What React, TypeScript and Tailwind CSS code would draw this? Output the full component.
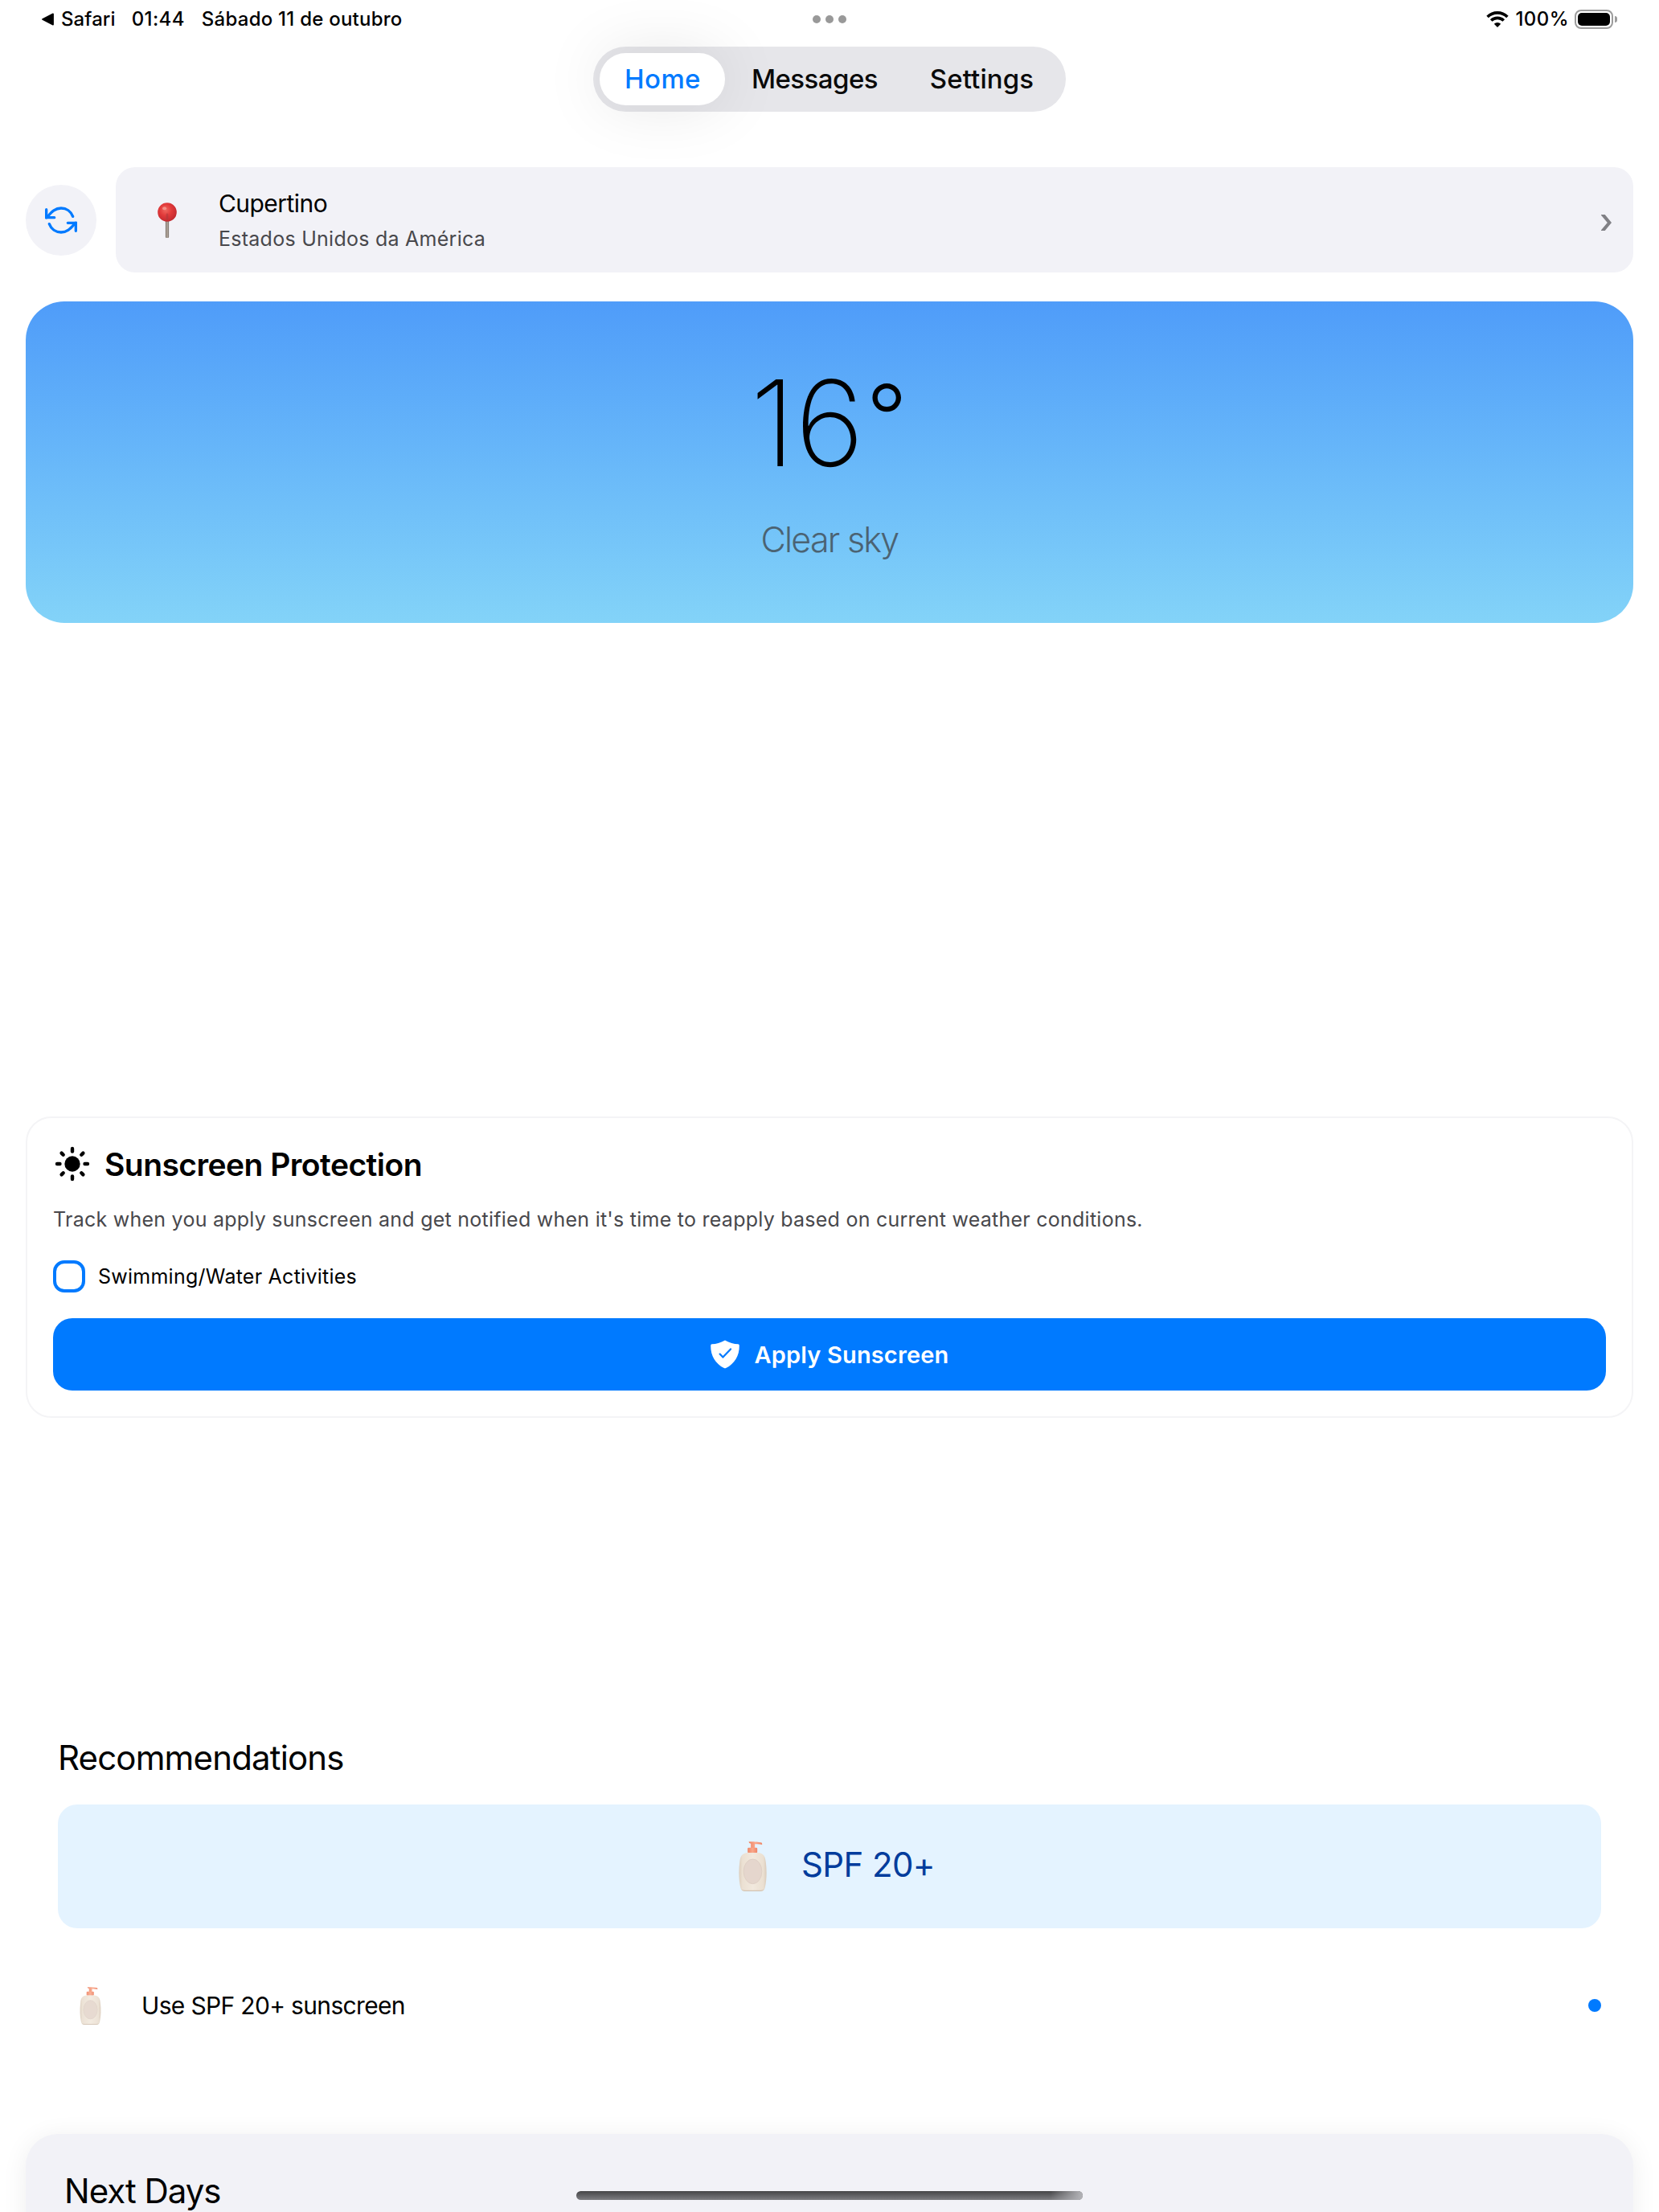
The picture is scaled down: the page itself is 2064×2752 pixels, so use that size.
function WifiIcon() {
  return (
    <svg width="28" height="20" viewBox="0 0 28 20" fill="none" stroke="#000" strokeWidth="3.6">
      <path d="M1.6 7 A17.6 17.6 0 0 1 26.4 7" />
      <path d="M6.2 11.6 A11 11 0 0 1 21.8 11.6" />
      <path d="M14 20 L9.8 15.7 A6 6 0 0 1 18.2 15.7 Z" fill="#000" stroke="none" />
    </svg>
  );
}

function Battery() {
  return (
    <div className="flex items-center gap-[2px]">
      <div className="h-6 w-12 rounded-[8px] border-2 border-[#9c9c9c] p-[2px]">
        <div className="h-full w-full rounded-[5px] bg-black" />
      </div>
      <div className="h-2 w-[3px] rounded-r-full bg-[#9c9c9c]" />
    </div>
  );
}

function StatusBar() {
  return (
    <div className="grid h-12 grid-cols-3 items-center pr-[52px] pl-[52px] text-[24px] leading-none font-medium">
      <div className="flex items-center whitespace-nowrap">
        <svg width="15" height="16" viewBox="0 0 15 16" stroke="#000" strokeWidth="1.8" strokeLinejoin="round">
          <path d="M1 8 L14 1.4 V14.6 Z" />
        </svg>
        <span className="ml-[9px] tracking-[0.1px]">Safari</span>
        <span className="ml-5 tracking-[0.38px]">01:44</span>
        <span className="ml-[21px] tracking-[0.24px]">Sábado 11 de outubro</span>
      </div>
      <div className="flex justify-center gap-1.5">
        <div className="size-2.5 rounded-full bg-[#999999]" />
        <div className="size-2.5 rounded-full bg-[#999999]" />
        <div className="size-2.5 rounded-full bg-[#999999]" />
      </div>
      <div className="flex items-center justify-end">
        <WifiIcon />
        <span className="mr-[7px] ml-2 tracking-[0.45px]">100%</span>
        <Battery />
      </div>
    </div>
  );
}

function TabBar() {
  return (
    <nav className="mx-auto mt-[10px] flex h-[81px] w-[588px] items-center rounded-full bg-[#e6e6ea] p-2 text-[33px] leading-none font-medium text-[#0a0a0a]">
      <div className="flex h-[65px] w-[156px] items-center justify-center rounded-full bg-white pl-px tracking-[0.4px] text-[#007aff] shadow-[0_0_80px_rgba(0,0,0,0.1)]">
        Home
      </div>
      <div className="flex w-[223px] justify-center tracking-[-0.52px]">Messages</div>
      <div className="flex w-[193px] justify-center tracking-[0.09px]">Settings</div>
    </nav>
  );
}

function RefreshIcon() {
  return (
    <svg
      width="40"
      height="34"
      viewBox="0 0 120 102"
      fill="none"
      stroke="#007aff"
      strokeWidth="10"
      strokeLinecap="round"
      strokeLinejoin="miter"
    >
      <path d="M104 37 C97 18 80 6 60 6 C34 6 22 24 6 41" />
      <path d="M5 11 V41 H35" />
      <path d="M16 65 C23 84 40 96 60 96 C86 96 98 78 114 61" />
      <path d="M115 91 V61 H85" />
    </svg>
  );
}

function PinIcon() {
  return (
    <svg width="24" height="44" viewBox="0 0 24 44">
      <defs>
        <radialGradient id="pinHead" cx="0.42" cy="0.38" r="0.62">
          <stop offset="0" stopColor="#f0685f" />
          <stop offset="0.5" stopColor="#e23a3a" />
          <stop offset="1" stopColor="#c22a30" />
        </radialGradient>
        <linearGradient id="pinStick" x1="0" x2="1" y1="0" y2="0">
          <stop offset="0" stopColor="#6f665f" />
          <stop offset="0.5" stopColor="#bdb1a6" />
          <stop offset="1" stopColor="#6f665f" />
        </linearGradient>
      </defs>
      <rect x="9.9" y="22" width="4.2" height="22" rx="1.2" fill="url(#pinStick)" />
      <circle cx="12" cy="12" r="11.8" fill="url(#pinHead)" />
      <ellipse cx="8.6" cy="7.2" rx="2.6" ry="2" fill="#f7a39a" opacity="0.75" />
      <rect x="10.6" y="13.5" width="2.8" height="8" rx="1.4" fill="#a93a3c" opacity="0.55" />
    </svg>
  );
}

function LotionIcon({ className }: { className: string }) {
  return (
    <svg className={className} viewBox="0 0 104 186">
      <defs>
        <linearGradient id="lotionBody" x1="0" x2="1" y1="0" y2="0">
          <stop offset="0" stopColor="#dccebe" />
          <stop offset="0.12" stopColor="#ebe0d2" />
          <stop offset="0.5" stopColor="#f2e9de" />
          <stop offset="0.88" stopColor="#ebe0d2" />
          <stop offset="1" stopColor="#dacbbb" />
        </linearGradient>
        <linearGradient id="lotionPump" x1="0" x2="1" y1="0" y2="0">
          <stop offset="0" stopColor="#ee8465" />
          <stop offset="0.5" stopColor="#faa98c" />
          <stop offset="1" stopColor="#ee8465" />
        </linearGradient>
      </defs>
      <path d="M37 1 C50 0 74 2 84 4 Q88 6 87 12 C78 9 66 9 60 10 V25 H45 V8 L39 6 Z" fill="url(#lotionPump)" />
      <rect x="33" y="23" width="36" height="20" rx="4" fill="url(#lotionPump)" />
      <path
        d="M34 42 H70 C92 43 99 56 101 78 C105 110 104 145 98 171 Q95 186 83 186 H21 Q9 186 6 171 C0 145 -1 110 3 78 C5 56 12 43 34 42 Z"
        fill="url(#lotionBody)"
      />
      <path d="M9 178 Q13 186 21 186 H83 Q91 186 95 178 Q90 182 83 182 H21 Q14 182 9 178 Z" fill="#d3c3b2" />
      <ellipse cx="52" cy="112" rx="34" ry="46" fill="#e5d6cd" stroke="#dccdc2" strokeWidth="2.5" />
    </svg>
  );
}

function ChevronIcon() {
  return (
    <svg width="13" height="20" viewBox="0 0 13 20" fill="none" stroke="#808085" strokeWidth="4.1">
      <path d="M0.4 -2 L10.4 10 L0.4 22" />
    </svg>
  );
}

function LocationRow() {
  return (
    <div className="mt-[69px] flex items-center gap-6">
      <div className="flex size-[88px] items-center justify-center rounded-full bg-[#f2f2f7]">
        <RefreshIcon />
      </div>
      <div className="flex h-[131px] flex-1 items-center rounded-[24px] bg-[#f2f2f7] pr-[27px]">
        <div className="flex w-32 justify-center">
          <PinIcon />
        </div>
        <div className="flex flex-1 flex-col pt-[3px]">
          <div className="text-[30px] leading-[44px] tracking-[-0.55px]">Cupertino</div>
          <div className="text-[25px] leading-[44px] tracking-[0.26px] text-[#48484c]">
            Estados Unidos da América
          </div>
        </div>
        <div className="mt-[6px]">
          <ChevronIcon />
        </div>
      </div>
    </div>
  );
}

function WeatherCard() {
  return (
    <div className="mt-9 flex h-[400px] flex-col items-center rounded-[48px] bg-linear-to-b from-[#4f9cf9] to-[#83d3f8] pt-[62px]">
      <div className="flex items-baseline pr-0.5 leading-[180px] font-extralight">
        <span className="text-[148px] tracking-[-0.6px]">16</span>
        <span className="relative -top-[21px] ml-[3px] text-[112px] leading-none font-[260]">°</span>
      </div>
      <div className="mt-[28px] text-[43px] leading-[53px] font-light tracking-[-1.75px] text-[#4b6373]">
        Clear sky
      </div>
    </div>
  );
}

function SunIcon() {
  const angles = [0, 90, 180, 270];
  return (
    <svg width="44" height="44" viewBox="-22 -22 44 44" stroke="#000" strokeWidth="4.4" strokeLinecap="round">
      <circle r="9.7" stroke="none" />
      {angles.map((a) => (
        <g key={a} transform={`rotate(${a})`}>
          <path d="M0 -19 V-15.5" />
          <path d="M13.4 -13.4 L11.3 -11.3" />
        </g>
      ))}
    </svg>
  );
}

function ShieldIcon() {
  return (
    <svg width="36" height="36" viewBox="0 0 36 36">
      <path
        d="M18 0.4 C23.5 3.6 29 5 34.3 5.2 Q35.8 5.4 35.8 7 C36 20 29.5 30 19.2 35 Q18 35.5 16.8 35 C6.5 30 0 20 0.2 7 Q0.2 5.4 1.7 5.2 C7 5 12.5 3.6 18 0.4 Z"
        fill="#fff"
      />
      <path
        d="M11.6 17.6 L15.4 21.6 L25 11.4"
        fill="none"
        stroke="#007aff"
        strokeWidth="2.2"
        strokeLinecap="round"
        strokeLinejoin="round"
      />
    </svg>
  );
}

function SunscreenCard() {
  return (
    <div className="mt-[614px] flex h-[375px] flex-col rounded-[32px] border-2 border-[#f4f4f6] px-8 pt-[34px]">
      <div className="flex h-[46px] items-center pl-[2px]">
        <SunIcon />
        <span className="ml-[18px] text-[39px] leading-none font-semibold tracking-[-0.55px]">
          Sunscreen Protection
        </span>
      </div>
      <p className="mt-[27px] text-[25px] leading-[38px] tracking-[0.25px] text-[#48484c]">
        Track when you apply sunscreen and get notified when it's time to reapply based on current weather conditions.
      </p>
      <div className="mt-8 flex items-center gap-4">
        <div className="size-10 rounded-[14px] border-4 border-[#007aff]" />
        <span className="text-[25px] leading-none tracking-[0.25px]">Swimming/Water Activities</span>
      </div>
      <div className="mt-8 flex h-[90px] items-center justify-center gap-[19px] rounded-[24px] bg-[#007aff] text-white">
        <ShieldIcon />
        <span className="text-[29px] leading-none font-semibold tracking-[0.15px]">Apply Sunscreen</span>
      </div>
    </div>
  );
}

function Recommendations() {
  return (
    <section className="mt-[396px] px-10">
      <h2 className="text-[42px] leading-[53px] tracking-[-0.85px]">Recommendations</h2>
      <div className="mt-8 flex h-[154px] items-center justify-center gap-6 rounded-[24px] bg-[#e4f3ff]">
        <div className="flex w-[72px] justify-center pr-0.5">
          <LotionIcon className="h-[62px] w-[35px]" />
        </div>
        <span className="-mt-[5px] text-[42px] leading-none tracking-[-0.62px] text-[#003c9c]">SPF 20+</span>
      </div>
      <div className="mt-16 flex h-16 items-center">
        <div className="flex w-20 justify-center">
          <LotionIcon className="h-[47px] w-[27px] opacity-90" />
        </div>
        <span className="ml-6 flex-1 text-[30px] leading-none tracking-[-0.67px]">Use SPF 20+ sunscreen</span>
        <div className="size-4 rounded-full bg-[#007aff]" />
      </div>
    </section>
  );
}

function NextDays() {
  return (
    <section className="mt-[128px] h-[400px] shrink-0 rounded-[40px] bg-[#f2f2f7] px-12 pt-[45px] shadow-[0_4px_32px_rgba(0,0,0,0.07)]">
      <h2 className="text-[42px] leading-[52px] tracking-[-1px]">Next Days</h2>
    </section>
  );
}

export default function App() {
  return (
    <div className="relative h-[2752px] w-[2064px] overflow-hidden bg-white font-[Inter,sans-serif] text-black">
      <StatusBar />
      <TabBar />
      <main className="flex flex-col px-8">
        <LocationRow />
        <WeatherCard />
        <SunscreenCard />
        <Recommendations />
        <NextDays />
      </main>
      <div className="absolute bottom-[15px] left-[717px] h-[11px] w-[630px] overflow-hidden rounded-full bg-linear-to-b from-[#454547] to-[#7e7e82]">
        <div className="ml-auto h-full w-10 bg-linear-to-r from-transparent to-[#b4b4b8]" />
      </div>
    </div>
  );
}
